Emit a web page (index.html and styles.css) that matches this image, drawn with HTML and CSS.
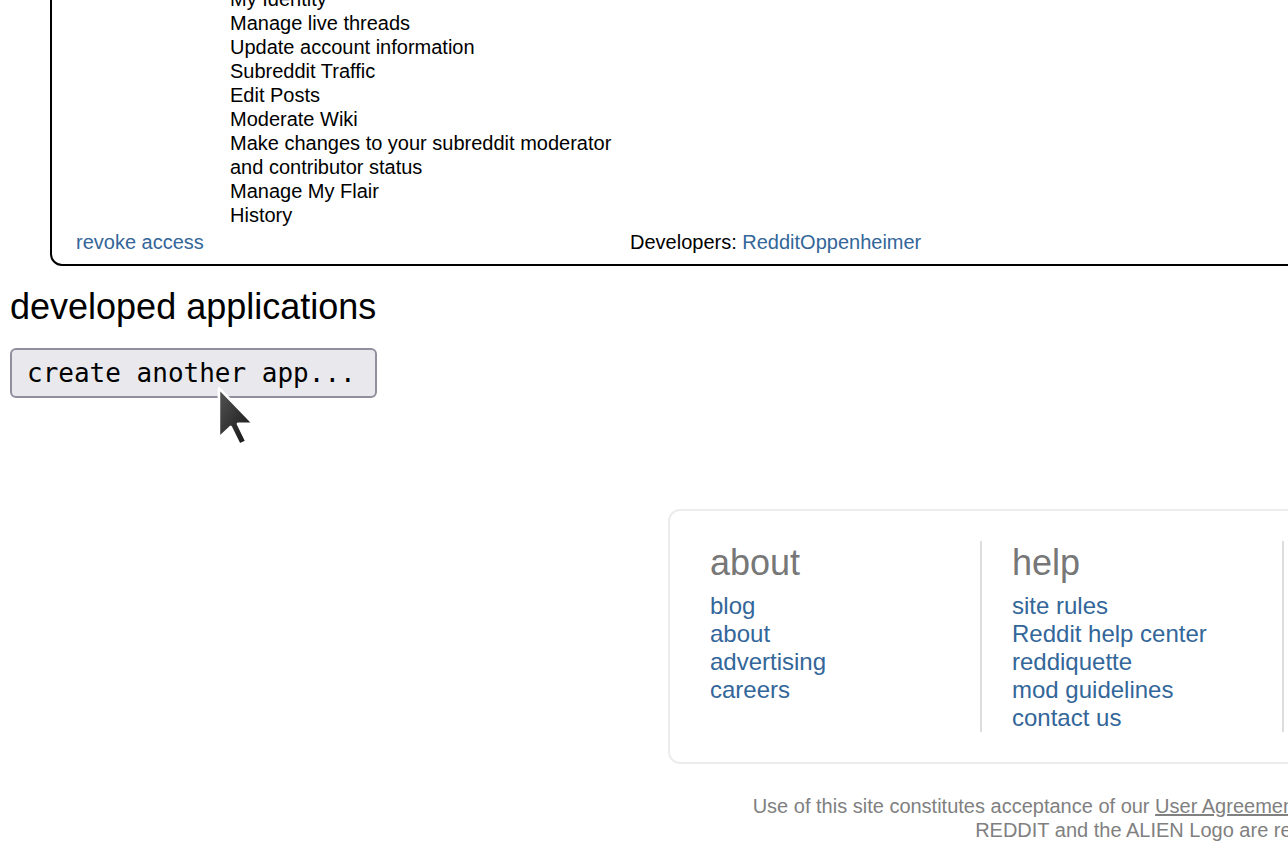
FILE: index.html
```html
<!DOCTYPE html>
<html>
<head>
<meta charset="utf-8">
<title>authorized applications</title>
<link rel="stylesheet" href="styles.css">
</head>
<body>
<div class="page">
  <div class="app-box">
    <div class="app-grid">
      <div class="app-side"></div>
      <ul class="scopes">
        <li>My Identity</li>
        <li>Manage live threads</li>
        <li>Update account information</li>
        <li>Subreddit Traffic</li>
        <li>Edit Posts</li>
        <li>Moderate Wiki</li>
        <li>Make changes to your subreddit moderator and contributor status</li>
        <li>Manage My Flair</li>
        <li>History</li>
      </ul>
      <div class="app-rest"></div>
      <div class="app-actions"><a href="#">revoke access</a></div>
      <div class="app-devs">Developers: <a href="#">RedditOppenheimer</a></div>
    </div>
  </div>

  <h2 class="section-title">developed applications</h2>
  <button class="create-btn" type="button">create another app...</button>

  <div class="footer-wrap">
    <div class="footer">
      <div class="col">
        <h3>about</h3>
        <ul>
          <li><a href="#">blog</a></li>
          <li><a href="#">about</a></li>
          <li><a href="#">advertising</a></li>
          <li><a href="#">careers</a></li>
        </ul>
      </div>
      <div class="col">
        <h3>help</h3>
        <ul>
          <li><a href="#">site rules</a></li>
          <li><a href="#">Reddit help center</a></li>
          <li><a href="#">reddiquette</a></li>
          <li><a href="#">mod guidelines</a></li>
          <li><a href="#">contact us</a></li>
        </ul>
      </div>
      <div class="col">
        <h3>apps &amp; tools</h3>
        <ul>
          <li><a href="#">Reddit for iPhone</a></li>
          <li><a href="#">Reddit for Android</a></li>
          <li><a href="#">mobile website</a></li>
        </ul>
      </div>
    </div>
  </div>

  <p class="legal">Use of this site constitutes acceptance of our <a href="#">User Agreement</a> and <a href="#">Privacy Policy</a>. &copy; 2024 reddit inc. All rights reserved.<br>REDDIT and the ALIEN Logo are registered trademarks of reddit inc.</p>
</div>

<svg class="cursor" viewBox="0 0 14 21" width="41" height="62" aria-hidden="true">
  <defs>
    <linearGradient id="cg" x1="0" y1="0" x2="1" y2="1">
      <stop offset="0" stop-color="#555"/>
      <stop offset="1" stop-color="#111"/>
    </linearGradient>
  </defs>
  <path d="M1,1 L1,18 L5,14.2 L8,20.3 L10.4,19.2 L7.5,13.2 L12.8,13.2 Z" fill="url(#cg)" stroke="#fff" stroke-width="0.9" stroke-linejoin="round"/>
</svg>
</body>
</html>
```

FILE: styles.css
```css
html {
  overflow: hidden;
  background: #fff;
}

body {
  margin: 0;
  font-family: "Liberation Sans", Arial, sans-serif;
  color: #000;
  position: relative;
}

a {
  color: #369;
  text-decoration: none;
}

.page {
  width: 2600px;
  margin-top: -40px;
  padding: 0 0 0 10px;
}

.app-box {
  margin-left: 40px;
  border: 2px solid #000;
  border-radius: 12px;
  padding: 25px 0 10px 0;
}

.app-grid {
  display: grid;
  grid-template-columns: 178px 400px 1fr;
  font-size: 20px;
  line-height: 24px;
}

.scopes {
  list-style: none;
  margin: 0;
  padding: 0;
}

.app-actions {
  padding: 3px 0 0 24px;
  grid-column: 1 / 3;
}

.app-devs {
  padding-top: 3px;
}

.section-title {
  font-weight: normal;
  font-size: 36px;
  line-height: 40px;
  margin: 21px 0 21px 0;
}

.create-btn {
  display: block;
  font-family: "DejaVu Sans Mono", monospace;
  font-size: 26px;
  line-height: 30px;
  padding: 8px 19px 8px 15px;
  color: #000;
  background: #e9e9ed;
  border: 2px solid #8f8f9d;
  border-radius: 6px;
}

.footer-wrap {
  padding: 111px 0 0 658px;
}

.footer {
  display: flex;
  border: 2px solid #ececec;
  border-radius: 12px;
  padding: 30px 0 30px 40px;
}

.col {
  width: 270px;
  border-right: 2px solid #ddd;
  padding-left: 30px;
}

.col:first-child {
  padding-left: 0;
}

.col h3 {
  margin: 0 0 9px 0;
  padding-top: 2px;
  font-weight: normal;
  font-size: 36px;
  line-height: 40px;
  color: #777;
}

.col ul {
  list-style: none;
  margin: 0;
  padding: 0;
  font-size: 24px;
  line-height: 28px;
}

.legal {
  margin: 30px 62px 0 0;
  text-align: center;
  font-size: 20px;
  line-height: 24px;
  color: #808080;
}

.legal a {
  color: #808080;
  text-decoration: underline;
}

.cursor {
  position: absolute;
  left: 216px;
  top: 385px;
}
```
